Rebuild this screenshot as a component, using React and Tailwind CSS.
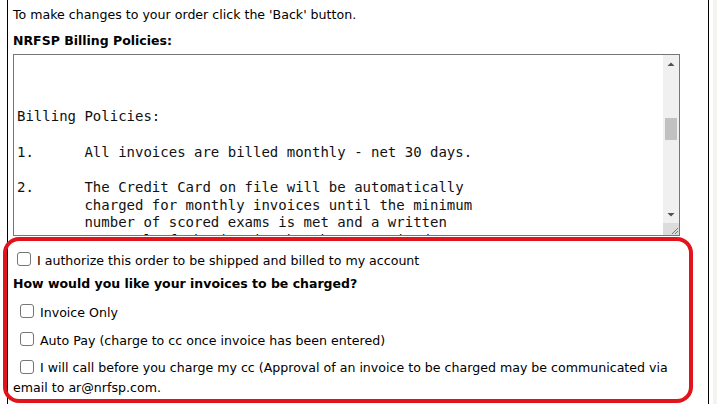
const policyText = `


Billing Policies:

1.      All invoices are billed monthly - net 30 days.

2.      The Credit Card on file will be automatically
        charged for monthly invoices until the minimum
        number of scored exams is met and a written
        approval of the invoice has been received.`

function Box() {
  return <span className="inline-block w-[14px] h-[14px] border border-[#767676] rounded-[3px] bg-white shrink-0" />
}

export default function App() {
  return (
    <div className="relative w-[717px] h-[404px] overflow-hidden bg-white flex text-[12.6px] text-black" style={{ fontFamily: '"DejaVu Sans", Verdana, sans-serif' }}>
      <div className="w-[7px] shrink-0" />
      <div className="w-[702px] shrink-0 border-l border-r border-black pl-[5px] pr-[28px]">
        <p className="h-[30px] pt-[6px] leading-[18px]">To make changes to your order click the 'Back' button.</p>
        <p className="h-[24px] pt-[2px] leading-[18px] font-bold text-[12.5px]">NRFSP Billing Policies:</p>
        <div className="flex h-[182px] border border-[#767676] bg-white">
          <pre className="flex-1 overflow-hidden pl-[3px] pt-0 text-[14px] leading-[17.7px] text-[#111]" style={{ fontFamily: '"DejaVu Sans Mono", Consolas, monospace' }}>{policyText}</pre>
          <div className="w-[16px] bg-[#f0f0f0] flex flex-col items-center">
            <svg width="16" height="16" viewBox="0 0 16 16" className="mt-[1px]"><path d="M4.5 10 L8 6.5 L11.5 10 Z" fill="#505050" /></svg>
            <div className="mt-[46px] w-[12px] h-[22px] bg-[#c1c1c1]" />
            <div className="flex-1" />
            <svg width="16" height="16" viewBox="0 0 16 16"><path d="M4.5 6 L8 9.5 L11.5 6 Z" fill="#505050" /></svg>
            <div className="w-[16px] h-[12px] bg-[#dcdcdc] flex items-end justify-end">
              <svg width="10" height="10" viewBox="0 0 10 10"><path d="M9 3 L3 9 M9 6 L6 9" stroke="#777" strokeWidth="1" /></svg>
            </div>
          </div>
        </div>
        <div className="mt-[14px] flex items-center gap-[6px] pl-[4px] h-[18px]">
          <Box />
          <span className="leading-[18px] translate-y-[2px]">I authorize this order to be shipped and billed to my account</span>
        </div>
        <p className="mt-[7px] font-bold leading-[18px] text-[12.5px]">How would you like your invoices to be charged?</p>
        <div className="mt-[9px] flex items-center gap-[6px] pl-[7px] h-[18px]">
          <Box />
          <span className="leading-[18px] translate-y-[2px]">Invoice Only</span>
        </div>
        <div className="mt-[10px] flex items-center gap-[6px] pl-[7px] h-[18px]">
          <Box />
          <span className="leading-[18px] translate-y-[2px]">Auto Pay (charge to cc once invoice has been entered)</span>
        </div>
        <p className="mt-[11px] leading-[18px]">
          <span className="inline-block align-[-2px] ml-[7px] mr-[6px]"><Box /></span>
          I will call before you charge my cc (Approval of an invoice to be charged may be communicated via email to ar@nrfsp.com.
        </p>
      </div>
      <div className="w-[4px] shrink-0" />
      <div className="flex-1 bg-[#f3f3ef]" />
      <div className="absolute left-[3px] top-[237px] w-[690px] h-[166px] border-4 border-[#e1141c] rounded-[16px] pointer-events-none" />
    </div>
  )
}
